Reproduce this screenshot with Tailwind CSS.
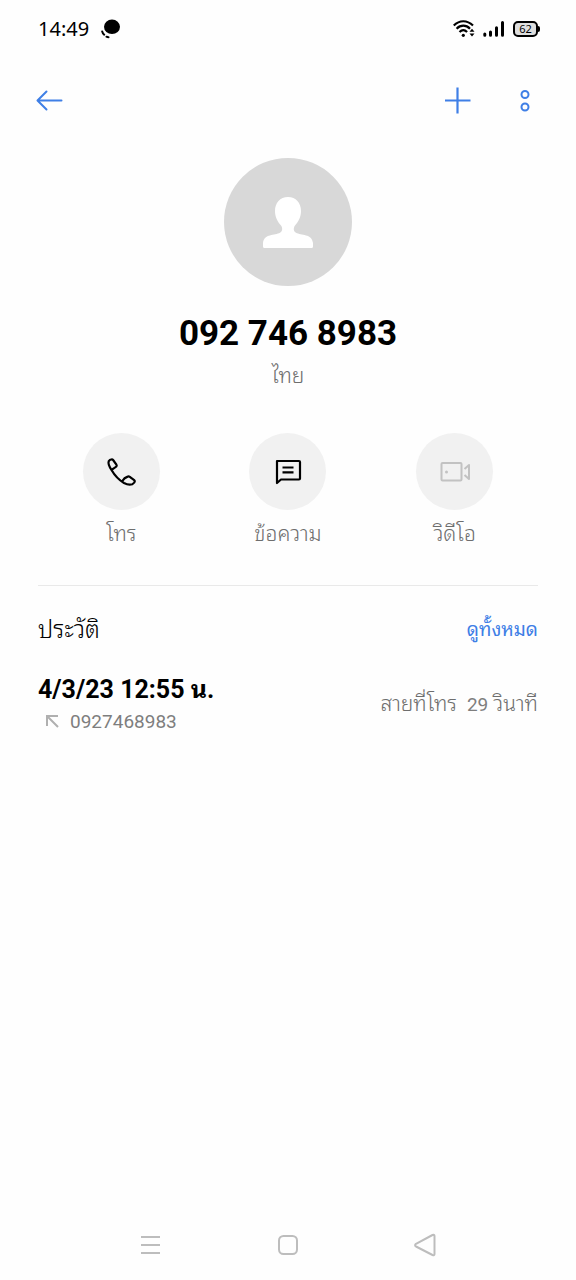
<!DOCTYPE html>
<html lang="th">
<head>
<meta charset="utf-8">
<meta name="viewport" content="width=device-width, initial-scale=1">
<title>092 746 8983</title>
<script src="https://cdn.jsdelivr.net/npm/@tailwindcss/browser@4"></script>
</head>
<body class="bg-[#fefefe]">
<div class="flex min-h-screen flex-col bg-[#fefefe] font-[Roboto,'Noto_Sans_Thai_Looped','Noto_Sans_Thai',Garuda,Loma,'Noto_Sans',sans-serif] text-black">
  <div class="flex h-14 items-center justify-between pt-0.5 pr-9 pl-[38px]">
    <div class="flex items-center gap-3">
      <span class="font-['Noto_Sans',sans-serif] text-xl leading-6">14:49</span>
      <svg class="h-5 w-5" viewBox="0 0 20 20" fill="none" stroke="#000" stroke-width="2" stroke-linecap="round"><ellipse cx="11" cy="7.800" rx="8" ry="7.300" fill="#000" stroke="none"/><path d="M1.200 12.500q.5 2 2 3.200M5.500 17.700q1 .6 2 .6"/><path d="M3.200 12q1.500 3 5 4" stroke="#fefefe" stroke-width="1"/></svg>
    </div>
    <div class="flex items-center gap-2">
      <svg class="h-5 w-[22px]" viewBox="0 0 22 20" fill="none" stroke="#000" stroke-width="2.200"><path d="M0.800 6.500C6.500.8 14 .8 20 6.500M3.600 9.700c4-4 9.500-4 13.400 0M6.500 13c2.300-2.300 5.300-2.300 7.600 0"/><circle cx="10.300" cy="16.300" r="1.600" fill="#000" stroke="none"/><path d="M16.500 12.800l2.500-3 2.500 3zM16.500 14.500l2.500 3 2.500-3z" fill="#000" stroke="none"/></svg>
      <svg class="h-5 w-[22px]" viewBox="0 0 22 20" fill="none" stroke="#000" stroke-width="3" stroke-linecap="round"><path d="M1.800 15v1.200M7.500 13v3.200M13.500 8.700v7.500M19.500 3.500v12.700"/></svg>
      <div class="flex items-center">
        <span class="flex h-4 w-[25px] items-center justify-center rounded-[5px] border-2 border-black bg-[#dedede] font-['Noto_Sans',sans-serif] text-[11px] leading-3">62</span>
        <span class="h-1.5 w-0.5 rounded-r bg-black"></span>
      </div>
    </div>
  </div>

  <header class="flex h-[88px] items-center justify-between px-9">
    <button aria-label="ย้อนกลับ"><svg class="h-7 w-7" viewBox="0 0 28 28" fill="none" stroke="#3f7fe6" stroke-width="2" stroke-linecap="round" stroke-linejoin="round"><path d="M25.500 14.500H2M10.500 5.500L1.500 14.500l9 9"/></svg></button>
    <div class="flex items-center gap-10">
      <button aria-label="เพิ่ม"><svg class="h-7 w-7" viewBox="0 0 28 28" fill="none" stroke="#3f7fe6" stroke-width="2.200"><path d="M13.500 1.500v26M1 14.500h25.500"/></svg></button>
      <button aria-label="ตัวเลือกเพิ่มเติม"><svg class="h-7 w-7" viewBox="0 0 28 28" fill="none" stroke="#3f7fe6" stroke-width="2"><circle cx="13" cy="8.500" r="3.500"/><circle cx="13" cy="21" r="3.500"/></svg></button>
    </div>
  </header>

  <main class="flex-1 px-[38px]">
    <section class="flex flex-col items-center pt-3.5">
      <svg class="h-32 w-32" viewBox="0 0 128 128"><circle cx="64" cy="64" r="64" fill="#d8d8d8"/><path fill="#fff" d="M64 39c8 0 13 6 13 14 0 6-2.500 10.500-6 14.500-1.500 2-2 5.500 1 7.200C77 77.500 88 75.500 89 85v3.500q0 1.500-1.500 1.500h-47q-1.500 0-1.500-1.500V85c1-9.500 12-7.500 17-10.300 3-1.700 2.500-5.200 1-7.200-3.500-4-6-8.500-6-14.500 0-8 5-14 13-14z"/></svg>
      <h1 class="mt-[26px] text-[35px] leading-11 font-bold">092 746 8983</h1>
      <p class="mt-1.5 text-[21px] leading-7 font-light text-[#6e6e6e]">ไทย</p>
    </section>

    <nav class="mt-[43px] grid grid-cols-3 text-[21px] leading-7 font-light text-[#6e6e6e]">
      <button class="flex flex-col items-center gap-2.5">
        <span class="flex h-[77px] w-[77px] items-center justify-center rounded-full bg-[#f1f1f1]"><svg class="h-8 w-8" viewBox="0 0 32 32" fill="none" stroke="#000" stroke-width="2.200" stroke-linejoin="round"><path d="M6.500 14C10 20 14 24 19 27c3 1.600 6 2 8.300 1.200 1.600-.7 2.500-1.600 2.500-2.900q0-.7-.6-1.200l-4.400-3.200q-1-.7-2.100-.3c-2.400.8-4 2-5.200 4.100M6.500 14C4 10 2.800 7.500 3.700 5.300c.7-1.500 1.800-1.900 3.200-1.900q.7 0 1.200.6l3.300 4.600q.7 1-.1 1.900C9.800 12 8.300 12.200 6.500 14"/></svg></span>
        <span>โทร</span>
      </button>
      <button class="flex flex-col items-center gap-2.5">
        <span class="flex h-[77px] w-[77px] items-center justify-center rounded-full bg-[#f1f1f1]"><svg class="h-8 w-8" viewBox="0 0 32 32" fill="none" stroke="#000" stroke-width="2.200" stroke-linejoin="round"><path d="M5 5h22q1 0 1 1v16.500q0 1-1 1H9l-4 3.500V5.500z"/><path d="M10.500 11.500h11M10.500 16.300h11"/></svg></span>
        <span>ข้อความ</span>
      </button>
      <button class="flex flex-col items-center gap-2.5" disabled>
        <span class="flex h-[77px] w-[77px] items-center justify-center rounded-full bg-[#f1f1f1]"><svg class="h-8 w-8" viewBox="0 0 32 32" fill="none" stroke="#c2c2c2" stroke-width="2" stroke-linejoin="round"><rect x="2.500" y="7" width="20" height="17.500" rx="1"/><path d="M25.500 13l4.500-4v14l-4.500-4"/><circle cx="7.500" cy="16" r="1.500" fill="#c2c2c2" stroke="none"/></svg></span>
        <span>วิดีโอ</span>
      </button>
    </nav>

    <section class="mt-[37px] border-t border-[#e9e9e9] pt-7">
      <div class="flex items-center justify-between">
        <h2 class="text-2xl leading-8 font-light">ประวัติ</h2>
        <a href="#" class="text-[19px] leading-8 text-[#3f7fe6]">ดูทั้งหมด</a>
      </div>
      <div class="mt-7 flex items-center justify-between">
        <div>
          <p class="text-[25px] leading-8 font-bold">4/3/23 12:55 น.</p>
          <p class="flex items-center gap-2 pl-1.5 text-[19px] leading-8 text-[#7e7e7e]">
            <svg class="h-4 w-[18px]" viewBox="0 0 18 16" fill="none" stroke="#b0b0b0" stroke-width="2"><path d="M3 12V2h11M3 2l11 11"/></svg>
            <span>0927468983</span>
          </p>
        </div>
        <p class="flex items-center gap-2.5 pb-1 text-[21px] leading-8 font-light text-[#6e6e6e]"><span>สายที่โทร</span><span><span class="text-[19px] font-normal text-[#7e7e7e]">29</span> วินาที</span></p>
      </div>
    </section>
  </main>

  <footer class="flex h-[70px] items-center justify-center gap-[110px] text-[#bdbdbd]">
    <button aria-label="แอปล่าสุด"><svg class="h-7 w-7" viewBox="0 0 28 28" fill="none" stroke="currentColor" stroke-width="2"><path d="M5 6h19M5 14h19M5 22h19"/></svg></button>
    <button aria-label="หน้าหลัก"><svg class="h-7 w-7" viewBox="0 0 28 28" fill="none" stroke="currentColor" stroke-width="2"><rect x="5" y="5" width="18" height="18" rx="4.500"/></svg></button>
    <button aria-label="กลับ"><svg class="h-7 w-7" viewBox="0 0 28 28" fill="none" stroke="currentColor" stroke-width="2" stroke-linejoin="round"><path d="M4 12.800L20.500 4q2-.8 2 1v18q0 1.800-2 1L4 15.500q-1.800-1.300 0-2.700z"/></svg></button>
  </footer>
</div>
</body>
</html>
